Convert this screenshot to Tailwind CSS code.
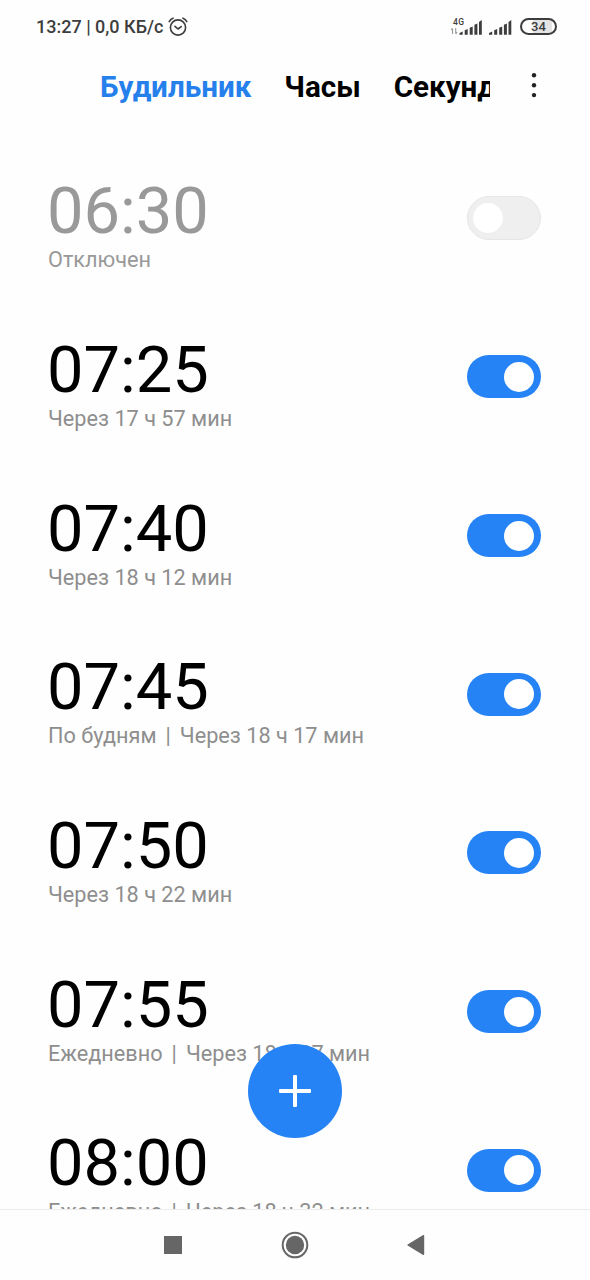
<!DOCTYPE html>
<html lang="ru">
<head>
<meta charset="utf-8">
<title>Будильник</title>
<script src="https://cdn.jsdelivr.net/npm/@tailwindcss/browser@4"></script>
</head>
<body class="bg-white">
<div class="relative flex h-[1280px] w-[590px] flex-col overflow-hidden bg-[#fefefe] font-['Roboto',sans-serif]">

  <!-- Status bar -->
  <div class="flex h-[53px] shrink-0 items-center justify-between pl-9 pr-[33px] text-[#3d3d3d]">
    <div class="flex items-center">
      <span class="whitespace-pre text-[18px] font-medium leading-6">13:27 | 0,0 КБ/с</span>
      <svg class="ml-[5px] h-5 w-5" viewBox="0 0 20 20" fill="none" stroke="currentColor" stroke-width="1.6" stroke-linecap="round" stroke-linejoin="round"><circle cx="10" cy="10.5" r="7.6"/><path d="M7 9.3l3 2.7 3.2-2.4M1.2 4.6Q2.4 2.2 5 1.2M18.8 4.6Q17.6 2.2 15 1.2"/></svg>
    </div>
    <div class="flex items-center">
      <svg class="h-6 w-[64px]" viewBox="0 0 64 24" fill="currentColor">
        <text x="3" y="9.5" font-size="8.5" font-weight="500" textLength="11">4G</text>
        <path d="M2.500 19v-5.500M1.200 15l1.300-1.700M5.700 13v5.700M7 17.200l-1.300 1.700" stroke="#999" fill="none" stroke-width="1.100"/>
        <path d="M9.500 19.700v-1.600l3.200-1.600v3.200zM14.700 19.700v-4.500l3-1.200v5.700zM19.700 19.700v-7l3-1.200v8.200zM24.400 19.700v-10l3-1.200v11.200zM29 19.700v-12.700l2.800-2v14.700z"/>
        <path d="M39 19.700v-1.600l3.200-1.600v3.200zM44.200 19.700v-4.500l3-1.200v5.700zM49.200 19.700v-7l3-1.200v8.200zM53.900 19.700v-10l3-1.200v11.200zM58.500 19.700v-12.700l2.800-2v14.700z"/>
      </svg>
      <div class="ml-[6px] flex h-[17px] w-[37px] items-center justify-center rounded-full border-2 border-current bg-[linear-gradient(90deg,#fefefe_0_34%,#e4e4e4_34%_90%,#fefefe_90%)] text-[13px] font-medium leading-none">34</div>
    </div>
  </div>

  <!-- Tabs -->
  <div class="flex h-[86px] shrink-0 items-start pl-[100px] pt-[15px] text-[29.600px] font-bold leading-[38px] text-black">
    <div class="flex w-[390px] gap-[33px] overflow-hidden whitespace-nowrap">
      <span class="text-[#2680ec]">Будильник</span><span>Часы</span><span>Секундомер</span>
    </div>
    <svg class="ml-[39px] mt-[3px] h-[30px] w-[10px]" viewBox="0 0 10 30" fill="#222"><circle cx="5" cy="4.300" r="2.200"/><circle cx="5" cy="14.200" r="2.200"/><circle cx="5" cy="24.100" r="2.200"/></svg>
  </div>

  <!-- Alarms -->
  <div class="flex h-[1070px] flex-col overflow-hidden pl-[46px] pr-[49px]">
    <div class="flex h-[158.650px] shrink-0 items-center justify-between">
      <div class="pt-[14px] text-[#999]"><div class="ml-px text-[65px] leading-[70px]">06:30</div><div class="ml-[2px] whitespace-pre text-[21.700px] leading-[28px]">Отключен</div></div>
      <div class="flex h-11 w-[74px] items-center rounded-full border border-[#e6e6e6] bg-[#efefef] pl-[5px]"><div class="size-[30px] rounded-full bg-white"></div></div>
    </div>
    <div class="flex h-[158.650px] shrink-0 items-center justify-between">
      <div class="pt-[14px]"><div class="ml-px text-[65px] leading-[70px]">07:25</div><div class="ml-[2px] whitespace-pre text-[21.700px] leading-[28px] text-[#8e8e8e]">Через 17 ч 57 мин</div></div>
      <div class="flex h-[43px] w-[74px] items-center justify-end rounded-full bg-[#2583f5] pr-[7px]"><div class="size-[30px] rounded-full bg-white"></div></div>
    </div>
    <div class="flex h-[158.650px] shrink-0 items-center justify-between">
      <div class="pt-[14px]"><div class="ml-px text-[65px] leading-[70px]">07:40</div><div class="ml-[2px] whitespace-pre text-[21.700px] leading-[28px] text-[#8e8e8e]">Через 18 ч 12 мин</div></div>
      <div class="flex h-[43px] w-[74px] items-center justify-end rounded-full bg-[#2583f5] pr-[7px]"><div class="size-[30px] rounded-full bg-white"></div></div>
    </div>
    <div class="flex h-[158.650px] shrink-0 items-center justify-between">
      <div class="pt-[14px]"><div class="ml-px text-[65px] leading-[70px]">07:45</div><div class="ml-[2px] whitespace-pre text-[21.700px] leading-[28px] text-[#8e8e8e]">По будням<span class="mx-[9px]">|</span>Через 18 ч 17 мин</div></div>
      <div class="flex h-[43px] w-[74px] items-center justify-end rounded-full bg-[#2583f5] pr-[7px]"><div class="size-[30px] rounded-full bg-white"></div></div>
    </div>
    <div class="flex h-[158.650px] shrink-0 items-center justify-between">
      <div class="pt-[14px]"><div class="ml-px text-[65px] leading-[70px]">07:50</div><div class="ml-[2px] whitespace-pre text-[21.700px] leading-[28px] text-[#8e8e8e]">Через 18 ч 22 мин</div></div>
      <div class="flex h-[43px] w-[74px] items-center justify-end rounded-full bg-[#2583f5] pr-[7px]"><div class="size-[30px] rounded-full bg-white"></div></div>
    </div>
    <div class="flex h-[158.650px] shrink-0 items-center justify-between">
      <div class="pt-[14px]"><div class="ml-px text-[65px] leading-[70px]">07:55</div><div class="ml-[2px] whitespace-pre text-[21.700px] leading-[28px] text-[#8e8e8e]">Ежедневно<span class="mx-[9px]">|</span>Через 18 ч 27 мин</div></div>
      <div class="flex h-[43px] w-[74px] items-center justify-end rounded-full bg-[#2583f5] pr-[7px]"><div class="size-[30px] rounded-full bg-white"></div></div>
    </div>
    <div class="flex h-[158.650px] shrink-0 items-center justify-between">
      <div class="pt-[14px]"><div class="ml-px text-[65px] leading-[70px]">08:00</div><div class="ml-[2px] whitespace-pre text-[21.700px] leading-[28px] text-[#8e8e8e]">Ежедневно<span class="mx-[9px]">|</span>Через 18 ч 32 мин</div></div>
      <div class="flex h-[43px] w-[74px] items-center justify-end rounded-full bg-[#2583f5] pr-[7px]"><div class="size-[30px] rounded-full bg-white"></div></div>
    </div>
  </div>

  <!-- Add alarm -->
  <div class="absolute left-[248px] top-[1044px] flex size-[94px] items-center justify-center rounded-full bg-[#2583f5]">
    <svg class="size-8" viewBox="0 0 32 32" fill="#fff"><rect x="0" y="14" width="32" height="4" rx="1"/><rect x="14" y="0" width="4" height="32" rx="1"/></svg>
  </div>

  <!-- Navigation bar -->
  <div class="flex h-[71px] shrink-0 items-center justify-between border-t border-[#ececec] pl-[164px] pr-[165px] text-[#666]">
    <div class="size-[18px] bg-current"></div>
    <svg class="size-7" viewBox="0 0 28 28"><circle cx="14" cy="14" r="12.300" fill="none" stroke="currentColor" stroke-width="2"/><circle cx="14" cy="14" r="9.200" fill="currentColor"/></svg>
    <svg class="h-[22px] w-[18px]" viewBox="0 0 18 22" fill="currentColor" stroke="currentColor" stroke-width="1.400" stroke-linejoin="round"><path d="M1 11L16.500 1.700V20.300z"/></svg>
  </div>
</div>
</body>
</html>
